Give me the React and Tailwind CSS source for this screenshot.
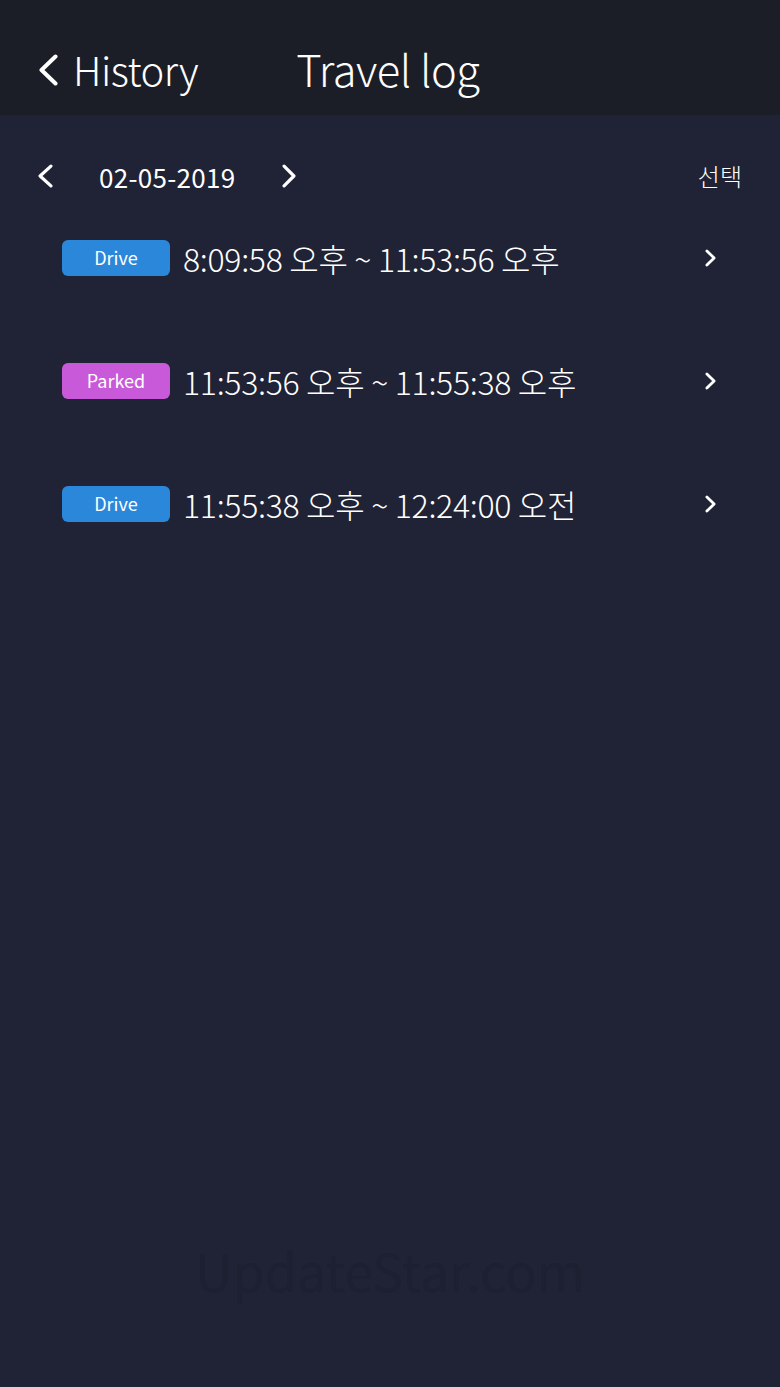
const trips = [
  { type: 'Drive', range: '8:09:58 오후 ~ 11:53:56 오후' },
  { type: 'Parked', range: '11:53:56 오후 ~ 11:55:38 오후' },
  { type: 'Drive', range: '11:55:38 오후 ~ 12:24:00 오전' },
];

// thin "<" / ">" chevron, sized by its box
function Chevron({ dir = 'right', w, h, stroke = 3, className = '' }) {
  const p = stroke / 2 + 0.5;
  const pts =
    dir === 'left'
      ? `${w - p},${p} ${p},${h / 2} ${w - p},${h - p}`
      : `${p},${p} ${w - p},${h / 2} ${p},${h - p}`;
  return (
    <svg width={w} height={h} viewBox={`0 0 ${w} ${h}`} className={`shrink-0 ${className}`}>
      <polyline points={pts} fill="none" stroke="white" strokeWidth={stroke} strokeLinecap="round" strokeLinejoin="round" />
    </svg>
  );
}

function Badge({ type }) {
  const color = type === 'Parked' ? 'bg-[#c85ad9]' : 'bg-[#2b87da]';
  return (
    <span className={`${color} w-[108px] h-[36px] rounded-[6px] flex items-center justify-center text-[18px] text-white shrink-0`}>
      {type}
    </span>
  );
}

function App() {
  return (
    <div
      className="min-h-[1387px] bg-[#1f2335] text-white flex flex-col"
      style={{ fontFamily: '"Noto Sans CJK KR", "Noto Sans", sans-serif' }}
    >
      <header className="h-[115px] bg-[#1b1e27] flex items-center pl-[39px] pt-[22px]">
        <Chevron dir="left" w={19} h={32} stroke={4} className="mt-[2px]" />
        <span className="ml-[15px] text-[40px] font-light tracking-[-0.5px] leading-none">History</span>
        <span className="ml-[98px] text-[43.5px] font-light tracking-[-0.5px] leading-none">Travel log</span>
      </header>

      <div className="flex items-center h-[40px] mt-[41px] pl-[38px] pr-[38px]">
        <Chevron dir="left" w={15} h={24} stroke={3.2} />
        <span className="ml-[46px] text-[26px] font-normal tracking-[0.3px]">02-05-2019</span>
        <Chevron dir="right" w={14} h={24} stroke={3.2} className="ml-[47px]" />
        <span className="ml-auto text-[24px] font-light">선택</span>
      </div>

      <ul className="flex flex-col pl-[62px] pr-[64px]">
        {trips.map((t, i) => (
          <li key={i} className="h-[123px] flex items-center">
            <Badge type={t.type} />
            <span className="ml-[13px] text-[32px] font-light tracking-[-0.3px] whitespace-nowrap">{t.range}</span>
            <Chevron dir="right" w={11} h={18} stroke={2.8} className="ml-auto" />
          </li>
        ))}
      </ul>

      <div className="mt-auto mb-[78px] text-center text-[52px] font-normal text-[#1c2030]">UpdateStar.com</div>
    </div>
  );
}

export default App;
